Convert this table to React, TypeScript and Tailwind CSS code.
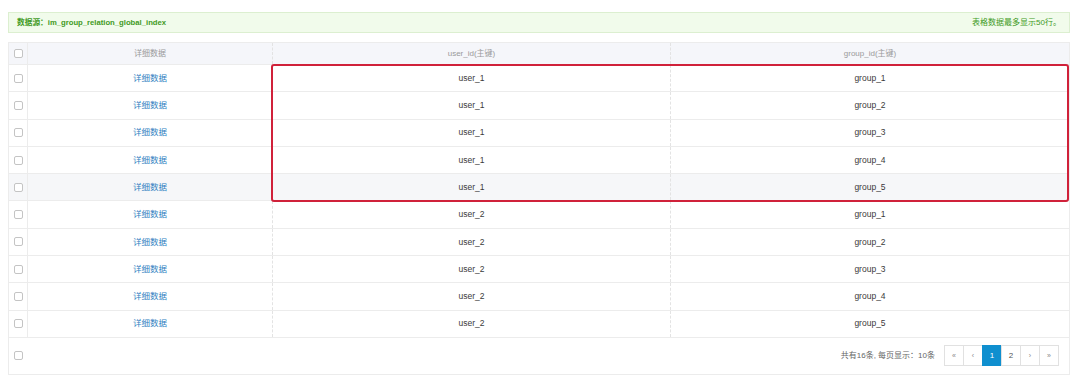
import React from 'react'

const rows = [
  ['user_1', 'group_1'],
  ['user_1', 'group_2'],
  ['user_1', 'group_3'],
  ['user_1', 'group_4'],
  ['user_1', 'group_5'],
  ['user_2', 'group_1'],
  ['user_2', 'group_2'],
  ['user_2', 'group_3'],
  ['user_2', 'group_4'],
  ['user_2', 'group_5'],
]

function Box() {
  return <span className="inline-block w-[9px] h-[9px] rounded-[2px] border border-[#c4c4c4] bg-white" />
}

export default function App() {
  return (
    <div
      className="w-[1080px] h-[385px] bg-white pt-[12px] pl-[8px] pr-[10px] text-[#3a3a3a]"
      style={{ fontFamily: '"Liberation Sans", "Noto Sans CJK SC", sans-serif' }}
    >
      <div className="flex items-center justify-between h-[21px] bg-[#f1fbeb] border border-[#dcefd0] px-[8px] text-[7.7px] font-bold text-[#3f9a24]">
        <span>数据源：im_group_relation_global_index</span>
        <span className="font-normal text-[8px]">表格数据最多显示50行。</span>
      </div>

      <div className="relative mt-[9px] w-[1062px] border border-[#ececec]">
        <div className="grid grid-cols-[19px_245px_398px_1fr] h-[22px] bg-[#f5f6fa] text-[8px] text-[#9a9a9a] border-b border-[#ececec]">
          <div className="flex items-center justify-center border-r border-[#ececec]"><Box /></div>
          <div className="flex items-center justify-center border-r border-dashed border-[#e3e3e3]">详细数据</div>
          <div className="flex items-center justify-center border-r border-dashed border-[#e3e3e3]">user_id(主键)</div>
          <div className="flex items-center justify-center">group_id(主键)</div>
        </div>

        {rows.map(([u, g], i) => (
          <div
            key={i}
            className={
              'grid grid-cols-[19px_245px_398px_1fr] h-[27.3px] text-[8.5px] border-b border-[#ececec] ' +
              (i === 4 ? 'bg-[#f6f7f9]' : 'bg-white')
            }
          >
            <div className="flex items-center justify-center border-r border-[#ececec]"><Box /></div>
            <div className="flex items-center justify-center border-r border-dashed border-[#e3e3e3] text-[#2f7fc1]">详细数据</div>
            <div className="flex items-center justify-center border-r border-dashed border-[#e3e3e3]">{u}</div>
            <div className="flex items-center justify-center">{g}</div>
          </div>
        ))}

        <div className="flex items-center h-[36px] pl-[5px] pr-[10px]">
          <Box />
          <span className="ml-auto text-[8px] text-[#666]">共有16条, 每页显示：10条</span>
          <div className="ml-[9px] flex text-[7px] text-[#888]">
            {['«', '‹', '1', '2', '›', '»'].map((t, i) => (
              <span
                key={i}
                className={
                  'flex items-center justify-center w-[20px] h-[21px] border -ml-px first:ml-0 ' +
                  (t === '1'
                    ? 'bg-[#0f8fcf] border-[#0f8fcf] text-white text-[8px]'
                    : t === '2'
                    ? 'border-[#e1e1e1] text-[#555] text-[8px]'
                    : 'border-[#e1e1e1]')
                }
              >
                {t}
              </span>
            ))}
          </div>
        </div>

        <div className="absolute left-[262px] top-[21px] w-[798px] h-[138px] border-2 border-[#d0213a] rounded-[3px] pointer-events-none" />
      </div>
    </div>
  )
}
